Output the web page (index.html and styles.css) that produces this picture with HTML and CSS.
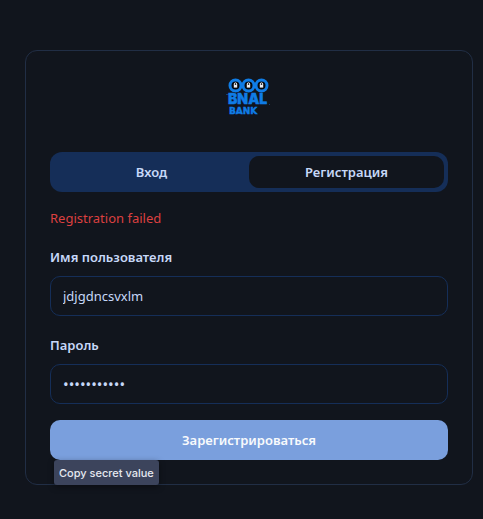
FILE: index.html
```html
<!DOCTYPE html>
<html lang="ru">
<head>
<meta charset="utf-8">
<meta name="viewport" content="width=device-width, initial-scale=1">
<title>BNAL Bank</title>
<link rel="stylesheet" href="styles.css">
</head>
<body>
<main class="card">
  <svg class="logo" viewBox="0 0 48 40" role="img" aria-label="BNAL Bank">
    <g class="logo-rings">
      <circle cx="10.5" cy="8.5" r="5.5"/>
      <circle cx="23.5" cy="8.5" r="5.5"/>
      <circle cx="36.5" cy="8.5" r="5.5"/>
    </g>
    <g class="logo-shackles">
      <path d="M9.3 8v-1a1.2 1.2 0 0 1 2.4 0v1"/>
      <path d="M22.3 8v-1a1.2 1.2 0 0 1 2.4 0v1"/>
      <path d="M35.3 8v-1a1.2 1.2 0 0 1 2.4 0v1"/>
    </g>
    <g class="logo-locks">
      <rect x="8.8" y="7.8" width="3.4" height="2.8"/>
      <rect x="21.8" y="7.8" width="3.4" height="2.8"/>
      <rect x="34.8" y="7.8" width="3.4" height="2.8"/>
    </g>
    <path class="logo-lines" d="M1 17.5h4M44 27.5h1"/>
    <text class="logo-name" x="3" y="27">BNAL</text>
    <text class="logo-sub" x="4" y="37">BANK</text>
  </svg>

  <div class="tabs" role="tablist">
    <button class="tab" type="button" role="tab" aria-selected="false">Вход</button>
    <button class="tab tab-active" type="button" role="tab" aria-selected="true">Регистрация</button>
  </div>

  <form class="form">
    <p class="error" role="alert">Registration failed</p>
    <div class="field">
      <label for="username">Имя пользователя</label>
      <input id="username" type="text" value="jdjgdncsvxlm">
    </div>
    <div class="field">
      <label for="password">Пароль</label>
      <input id="password" type="password" value="12345678901">
    </div>
    <div class="action">
      <button class="submit" type="submit">Зарегистрироваться</button>
      <div class="tooltip" role="tooltip">Copy secret value</div>
    </div>
  </form>
</main>
</body>
</html>
```
FILE: styles.css
```css
* {
  box-sizing: border-box;
}

body {
  margin: 0;
  padding: 50px 10px 34px 25px;
  background: #11151d;
  color: #c7d8f8;
  font: 13px/20px "Segoe UI", "Noto Sans", sans-serif;
}

.card {
  padding: 24px;
  border: 1px solid #212e45;
  border-radius: 12px;
}

.logo {
  display: block;
  width: 48px;
  height: 40px;
  margin: 2px auto 35px;
}

.logo-rings {
  fill: #05080d;
  stroke: #0f7ce6;
  stroke-width: 3;
}

.logo-locks {
  fill: #e8ecf2;
}

.logo-shackles {
  fill: none;
  stroke: #e8ecf2;
  stroke-width: 1;
}

.logo-lines {
  stroke: #123f72;
  stroke-width: 1;
}

.logo-name,
.logo-sub {
  fill: #0f7ce6;
  stroke: #0f7ce6;
  stroke-width: 0.4;
}

.logo-name {
  font: 900 14px Inter, sans-serif;
}

.logo-sub {
  font: 700 9px "DejaVu Sans", sans-serif;
}

.tabs {
  display: grid;
  grid-template-columns: 1fr 1fr;
  height: 40px;
  padding: 4px;
  border-radius: 12px;
  background: #152e58;
}

.tab,
.submit {
  border: 0;
  border-radius: 10px;
  background: none;
  color: inherit;
  font: inherit;
  font-weight: 600;
}

.tab {
  padding: 0 12px;
}

.tab-active {
  background: #11151d;
}

.form {
  display: grid;
  gap: 16px;
  margin-top: 16px;
}

.error {
  margin: 0;
  color: #dc4040;
}

.field {
  display: grid;
  gap: 6px;
}

.field label {
  font-weight: 600;
  line-height: 26px;
}

.field input {
  width: 100%;
  height: 40px;
  padding: 0 12px;
  border: 1px solid #152e58;
  border-radius: 10px;
  outline: 0;
  background: transparent;
  color: inherit;
  font: inherit;
}

.field input[type="password"] {
  font-size: 15px;
}

.action {
  position: relative;
}

.submit {
  display: block;
  width: 100%;
  height: 40px;
  background: #7a9fdd;
  color: #f8fafc;
}

.tooltip {
  position: absolute;
  top: 100%;
  left: 4px;
  padding: 3px 5px 2px;
  border-radius: 3px;
  background: #3c445c;
  box-shadow: 0 2px 6px #0006;
  color: #e6e9f0;
  font: 500 11px/20px Inter, sans-serif;
  white-space: nowrap;
}
```
